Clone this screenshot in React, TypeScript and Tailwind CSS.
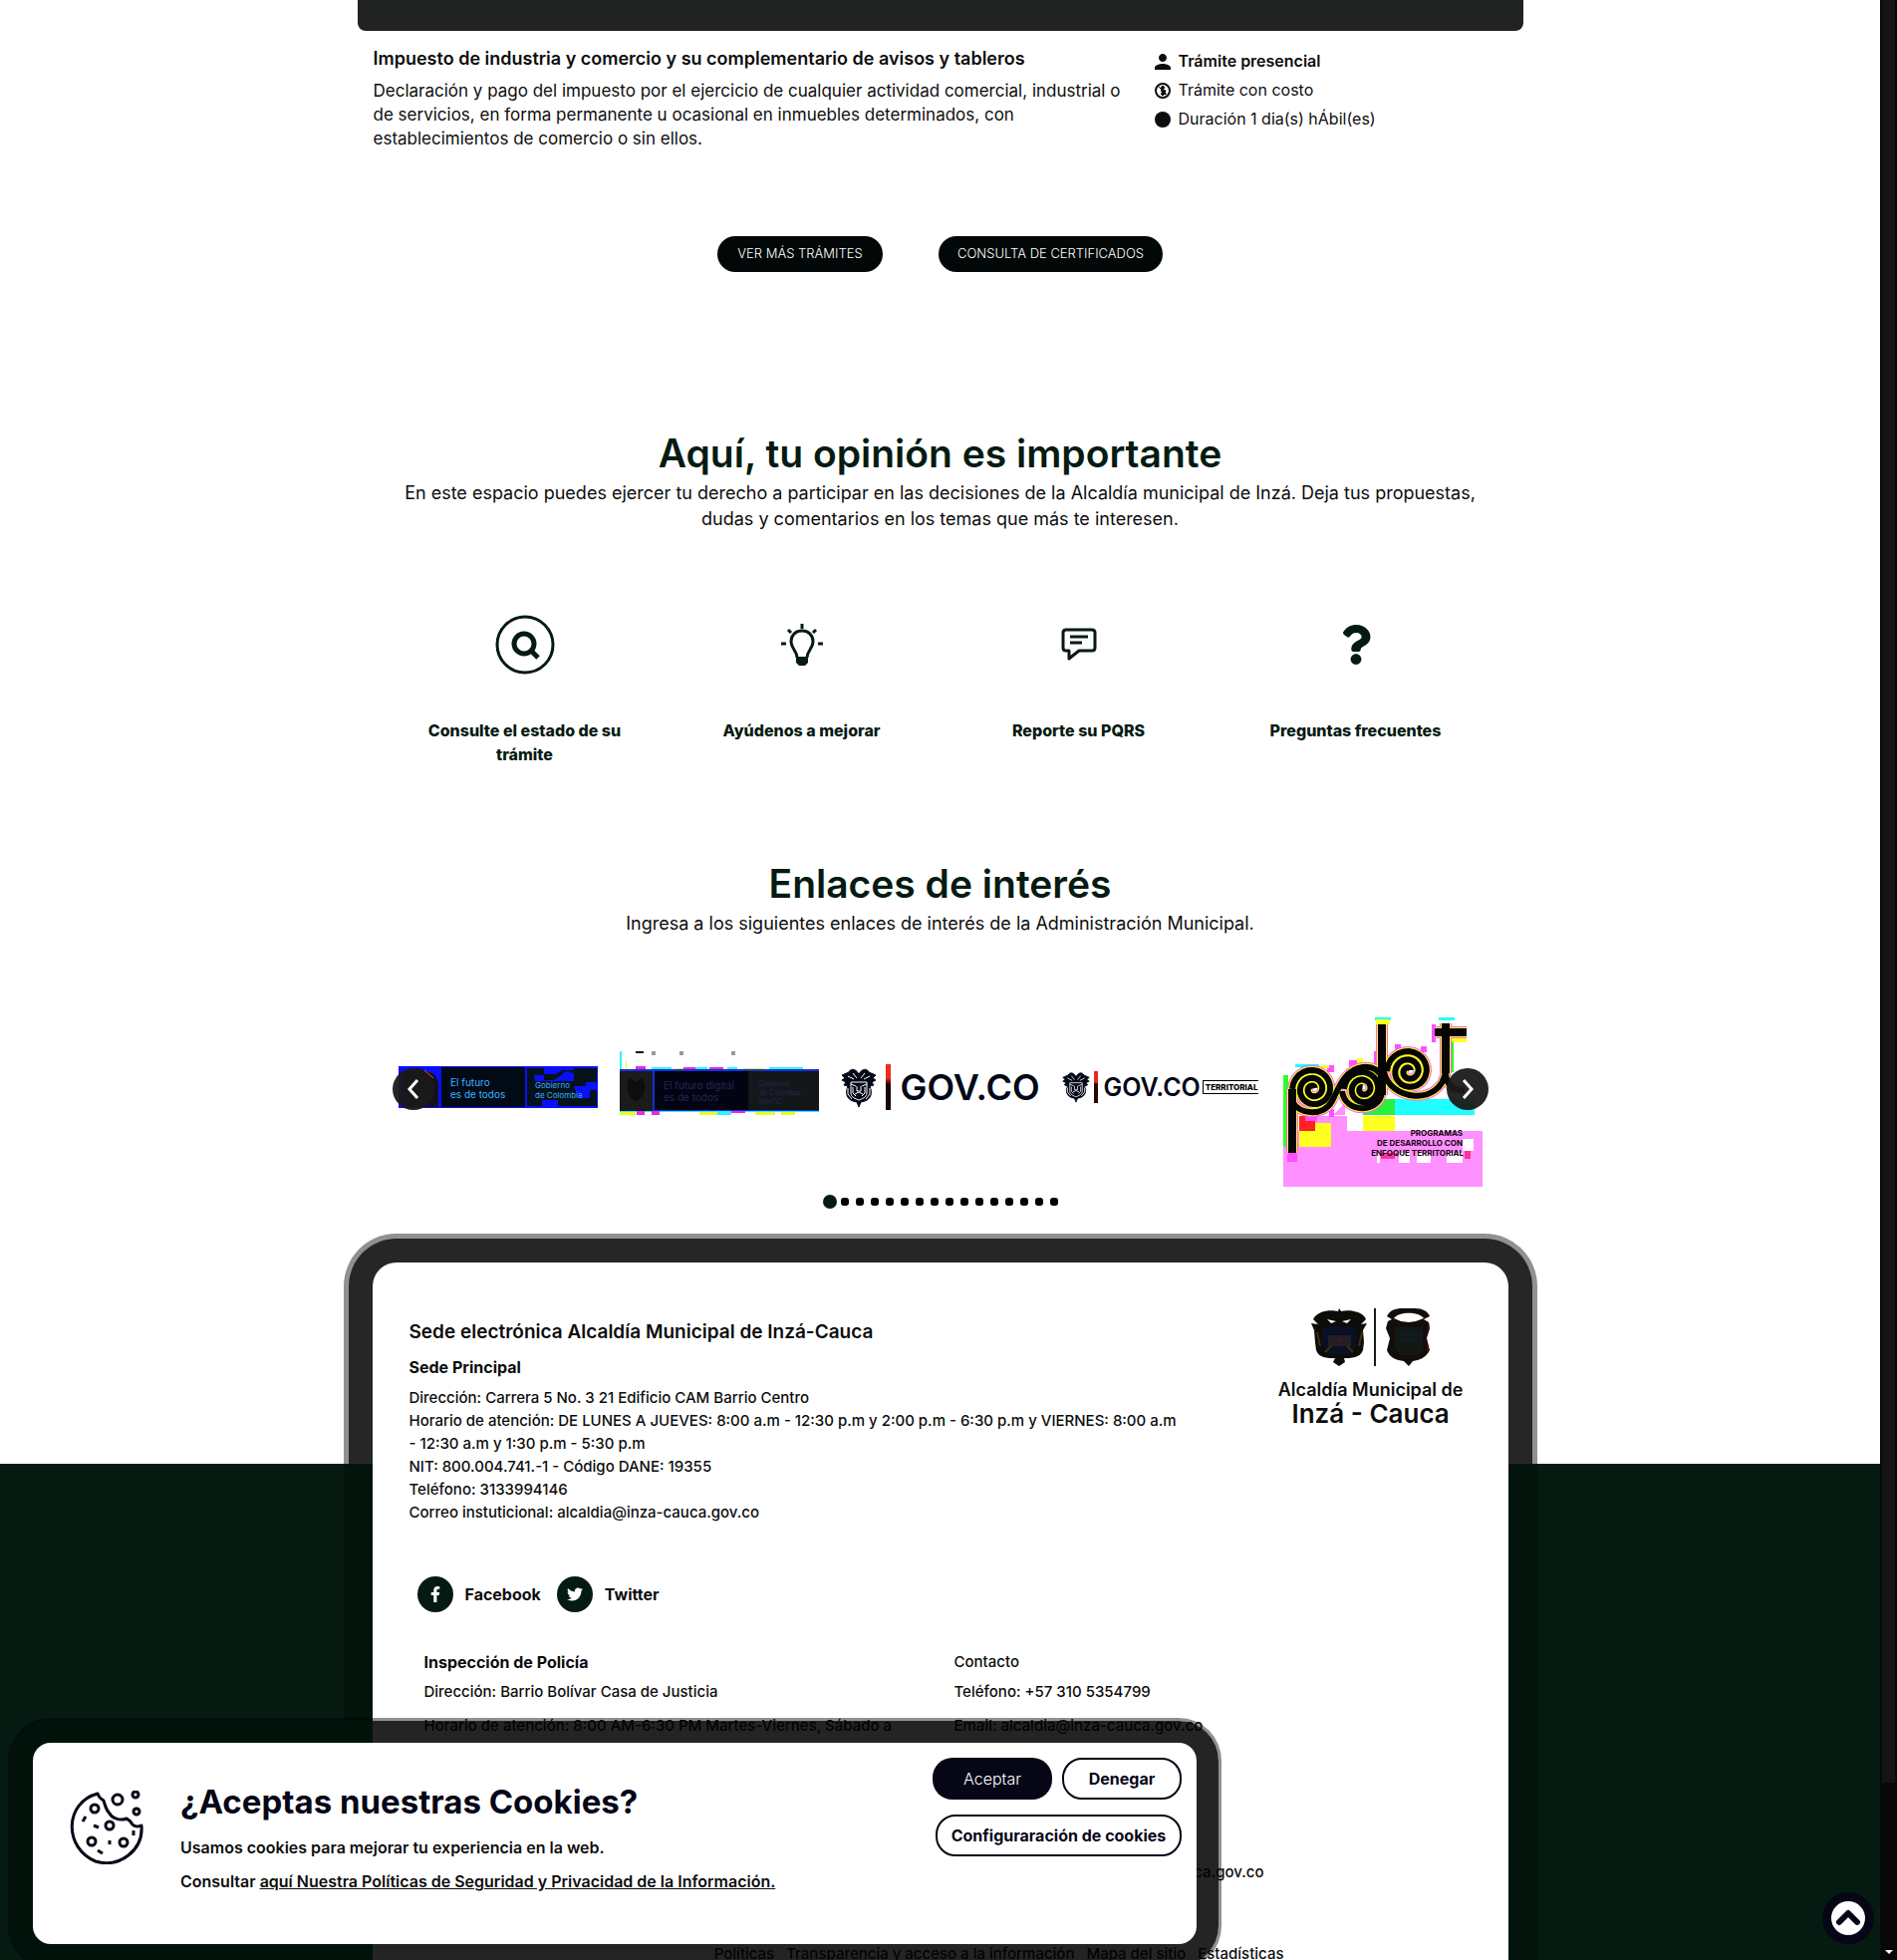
import React from 'react';
import { FaQuestion, FaTwitter, FaFacebookF } from 'react-icons/fa';
import { MdPerson } from 'react-icons/md';

function CoatLine({ className }: { className: string }) {
  return (
    <svg viewBox="0 0 36 40" className={className} fill="none" stroke="#020817" aria-hidden="true">
      <path d="M18 7 C14 0 9 2 8 5 L1 8 L4 11 L1 13 L5 15 L3 18 L7 19 C4 26 6 32 12 34 L16 35 L18 40 L20 35 L24 34 C30 32 32 26 29 19 L33 18 L31 15 L35 13 L32 11 L35 8 L28 5 C27 2 22 0 18 7Z" fill="#020817" strokeWidth="1" />
      <path d="M10 15 H26 V26 C26 30 21 32 18 33 C15 32 10 30 10 26Z" stroke="#fff" />
      <path d="M10 17 L15 19 M26 17 L21 19 M12 20 V26 L15 29 M24 20 V26 L21 29 M16 19 V24 H20 V19 M14 27 L18 25 L22 27" stroke="#fff" strokeWidth="1" />
      <path d="M7 9 L13 12 M29 9 L23 12 M12 6 L16 11 M24 6 L20 11 M7 21 V27 L11 32 M29 21 V27 L25 32" stroke="#fff" strokeWidth="1" />
    </svg>
  );
}

function FuturoBanner() {
  return (
    <svg viewBox="0 0 200 42" className="w-full" role="img" aria-label="El futuro es de todos">
      <rect width="200" height="42" fill="#0a10fa" />
      <path d="M4 6 L20 2 L36 8 L40 16 V41 H4Z" fill="#12121c" />
      <path d="M26 4 L35 12" stroke="#e86030" strokeWidth="1" />
      <rect x="43" y="1" width="84" height="40" fill="#020a16" />
      <path d="M129 2 H146 V8 H158 L164 4 H176 V2 H199 V16 H188 V24 H199 V40 H160 V34 H144 V40 H129Z" fill="#04121c" />
      <path d="M136 9 H146 V14 H156 L163 9 L168 5 L176 7 V15 H137Z M176 20 H192 V32 H180Z" fill="#0a10fa" />
      <g fontFamily="Inter, sans-serif">
        <g fill="#3db4ff" fontSize="10">
          <text x="52" y="20">El futuro</text>
          <text x="52" y="32">es de todos</text>
        </g>
        <g fill="#43a8f5" fontSize="8">
          <text x="137" y="22">Gobierno</text>
          <text x="137" y="32">de Colombia</text>
        </g>
      </g>
    </svg>
  );
}

function DigitalBanner() {
  return (
    <svg viewBox="0 0 200 64" className="w-full" role="img" aria-label="El futuro digital es de todos">
      <path d="M16 0 h8 v2 h-8Z" fill="#111" />
      <path d="M32 0 h4 v4 h-4Z M60 0 h4 v4 h-4Z M112 0 h4 v4 h-4Z" fill="#999" />
      <path d="M0 0 h2 v20 h-2Z M32 16 h20 v3 h-20Z M76 16 h12 v3 h-12Z M108 16 h10 v3 h-10Z M150 16 h34 v2 h-34Z M0 60 h200 v1 h-200Z M98 61 h14 v3 h-14Z" fill="#2ff3ff" />
      <path d="M6 9 h1 v9 h-1Z M18 17 h8 v2 h-8Z M56 17 h8 v2 h-8Z M124 17 h20 v1 h-20Z M0 61 h16 v3 h-16Z M80 61 h18 v3 h-18Z M136 61 h20 v3 h-20Z M162 61 h14 v3 h-14Z" fill="#e4ff20" />
      <path d="M16 15 h10 v3 h-10Z M64 16 h12 v2 h-12Z M90 16 h14 v2 h-14Z M17 60 h8 v4 h-8Z M32 60 h8 v4 h-8Z M112 60 h14 v2 h-14Z" fill="#e22be8" />
      <rect y="18" width="200" height="42" fill="#1230d8" />
      <rect y="20" width="33" height="40" fill="#1b1b1b" />
      <path d="M10 27 C5 32 7 46 16 50 C26 46 28 32 22 27 L16 31Z" fill="#0d0d0d" />
      <rect x="35" y="20" width="94" height="39" fill="#020412" />
      <rect x="129" y="20" width="71" height="39" fill="#14171a" />
      <g fontFamily="Inter, sans-serif">
        <g fill="#25255a" fontSize="10">
          <text x="44" y="38">El futuro digital</text>
          <text x="44" y="50">es de todos</text>
        </g>
        <g fill="#262650" fontSize="7">
          <text x="140" y="35">Gobierno</text>
          <text x="140" y="44">de Colombia</text>
          <text x="140" y="53">MinTIC</text>
        </g>
      </g>
    </svg>
  );
}

/** Inward spiral, clockwise from its leftmost point. */
function spiral(cx: number, cy: number, radius: number, turns: number) {
  const steps = Math.round(turns * 24);
  return Array.from({ length: steps + 1 }, (_, i) => {
    const angle = Math.PI + (i / 24) * Math.PI * 2;
    const r = radius - (radius - 2) * (i / steps);
    return `${i ? 'L' : 'M'}${(cx + r * Math.cos(angle)).toFixed(1)} ${(cy + r * Math.sin(angle)).toFixed(1)}`;
  }).join(' ');
}

function PdetLogo() {
  return (
    <svg viewBox="0 0 200 172" className="w-full" role="img" aria-label="Programas de desarrollo con enfoque territorial">
      <rect y="116" width="200" height="56" fill="#ff90ff" />
      <path d="M48 101 H64 V116 H16 V101Z" fill="#ff90ff" />
      <path d="M50 100 L62 88 V100Z" fill="#ff90ff" />
      <rect y="60" width="5" height="72" fill="#2cff2c" />
      <rect x="80" y="84" width="32" height="16" fill="#28f03c" />
      <rect x="112" y="84" width="80" height="16" fill="#20ffff" />
      <path d="M80 101 H112 V116 H80Z M16 116 H48 V132 H16Z M32 108 H48 V116 H32Z" fill="#ffff20" />
      <rect x="16" y="101" width="16" height="15" fill="#ff2020" />
      <path d="M12 52 H36 V49 H12Z M92 2 H108 V5 H92Z M156 2 H172 V5 H156Z" fill="#20ffff" />
      <path d="M167 25 h4 v32 h-4Z" fill="#2cff2c" />
      <path d="M91 36 h4 v18 h-4Z M66 45 h8 v8 h-8Z M112 29 h6 v6 h-6Z M149 9 h4 v18 h-4Z M4 138 h10 v9 h-10Z M44 50 h7 v7 h-7Z M46 94 h5 v8 h-5Z M22 102 h12 v4 h-12Z M138 31 h6 v6 h-6Z" fill="#ff50ff" />
      <path d="M168 22 h16 v5 h-16Z M93 4 h14 v5 h-14Z M38 50 h8 v3 h-8Z M74 43 h6 v6 h-6Z" fill="#ffff20" />
      <path d="M180 124 h11 v12 h-11Z M116 138 h11 v10 h-11Z M134 138 h14 v10 h-14Z M164 138 h16 v10 h-16Z M94 138 h3 v10 h-3Z" fill="#fff" />
      <path d="M98 138 h14 v6 h-14Z M182 136 h6 v8 h-6Z" fill="#ff309c" />
      {[
        { color: '#ff60ff', curve: 10, stem: 12 },
        { color: '#ffff20', curve: 8, stem: 10 },
        { color: '#050505', curve: 6, stem: 8 },
      ].map((pen) => (
        <g key={pen.color} fill="none" stroke={pen.color}>
          <g strokeWidth={pen.stem}>
            <path d="M9 138 V74" />
            <path d="M99 9 V80" />
            <path d="M163 8 V58 M152 17 H184" />
          </g>
          <g strokeWidth={pen.curve}>
            <path d={spiral(30, 74, 21, 2.4)} />
            <path d={spiral(80, 74, 19, 2.2)} />
            <path d={spiral(126, 56, 22, 2.4)} />
            <path d="M9 86 C16 100 40 102 49 86 C56 72 62 54 80 52 C90 51 96 56 99 62" />
            <path d="M59 76 C62 100 98 98 99 76" />
            <path d="M101 56 C106 86 158 92 163 56 C163 70 170 76 182 75" />
          </g>
        </g>
      ))}
      <g fontFamily="Inter, sans-serif" fontWeight="700" fontSize="8" textAnchor="end" fill="#14000f">
        <text x="180" y="121">PROGRAMAS</text>
        <text x="180" y="131">DE DESARROLLO CON</text>
        <text x="181" y="141">ENFOQUE TERRITORIAL</text>
      </g>
    </svg>
  );
}

function AlcaldiaEmblems() {
  return (
    <svg viewBox="0 0 120 58" className="w-[120px]" aria-hidden="true">
      <path d="M2 11 C6 2 20 1 27 3 L28 0 L30 3 C38 1 52 3 55 11 L50 16 L56 15 L52 22 L53 34 L52 42 C49 50 40 50 33 50 L34 54 L28 58 L22 54 L24 50 C16 50 8 50 5 42 L4 34 L3 22 L0 15 L7 16Z" fill="#0d0c08" />
      <path d="M16 11 L25 13 L20 15Z M40 11 L31 13 L36 15Z" fill="#fff" />
      <path d="M11 22 L16 18 H41 L46 22 V36 L40 46 H17 L11 36Z" fill="#091024" />
      <path d="M17 27 H40 V38 H17Z" fill="#202024" />
      <circle cx="28" cy="32" r="2" fill="#51121a" />
      <path d="M14 44 L20 38 M42 44 L36 38 M6 24 L9 38 M51 24 L48 38" stroke="#40300c" strokeWidth="2" />
      <path d="M64 0 V58" stroke="#1b1b1b" strokeWidth="2" />
      <path d="M76 8 C79 2 84 0 92 0 H104 C112 0 117 3 119 8 L113 11 L118 14 L119 20 L116 30 L119 42 C115 50 108 52 102 53 L98 58 L93 53 C86 52 79 50 76 42 L79 30 L75 20 L77 13 L81 11Z" fill="#140e0a" />
      <path d="M83 10 C88 3 108 3 113 10 L105 13 L98 14 L90 13Z" fill="#fff" />
      <path d="M84 19 H112 V40 L107 47 H89 L84 40Z" fill="#131817" />
      <path d="M86 26 H110 M87 32 H108" stroke="#0a2028" strokeWidth="2" />
      <path d="M118 16 V22 M117 36 V42" stroke="#6c1410" strokeWidth="1" />
    </svg>
  );
}

function SearchIcon() {
  return (
    <svg viewBox="0 0 60 60" className="size-[60px]" fill="none" stroke="#051b12" aria-hidden="true">
      <circle cx="30" cy="30" r="28" strokeWidth="3" />
      <circle cx="29" cy="29" r="10" strokeWidth="5" />
      <path d="M36 36 L43 43" strokeWidth="5" />
    </svg>
  );
}

function BulbIcon() {
  return (
    <svg viewBox="0 0 42 42" className="size-[42px]" fill="none" stroke="#051b12" strokeWidth="3" aria-hidden="true">
      <path d="M16 34 C16 27 10 25 10 18 C10 11 15 7 21 7 C27 7 32 11 32 18 C32 25 26 27 26 34" />
      <path d="M15 33 H27 V39 L24 42 H18 L15 39Z" fill="#051b12" stroke="none" />
      <path d="M21 0 V5 M7 6 L10 9 M35 6 L32 9 M0 20 H5 M37 20 H42" />
    </svg>
  );
}

function CommentIcon() {
  return (
    <svg viewBox="0 0 36 34" className="w-[36px]" fill="none" stroke="#051b12" strokeWidth="3" aria-hidden="true">
      <path d="M5 2 H31 Q34 2 34 5 V20 Q34 23 31 23 H18 L8 31 V23 H5 Q2 23 2 20 V5 Q2 2 5 2Z" strokeLinejoin="round" />
      <path d="M9 9 H27 M9 15 H21" />
    </svg>
  );
}

function CookieIcon() {
  return (
    <svg viewBox="0 0 74 74" className="w-[74px] shrink-0" fill="none" stroke="#060617" strokeWidth="3" aria-hidden="true">
      <path d="M28 3 C-6 12 -6 58 26 71 C50 78 74 60 72 35 C68 37 63 36 61 31 L57 28 C50 31 42 27 40 23 C36 19 36 16 34 10 C31 8 29 7 28 3Z" strokeLinejoin="round" />
      <circle cx="48" cy="9" r="5" />
      <circle cx="66" cy="4" r="3" />
      <circle cx="67" cy="21" r="3" />
      <circle cx="25" cy="18" r="4" />
      <circle cx="40" cy="35" r="4" />
      <circle cx="22" cy="51" r="4" />
      <circle cx="54" cy="52" r="4" />
      <path d="M13 31 L16 26 M24 35 L29 37 M40 50 V54 M64 40 V45 M28 60 L33 63" />
    </svg>
  );
}

function CostIcon() {
  return (
    <svg viewBox="0 0 16 16" className="size-4" fill="none" stroke="#0d0d0d" aria-hidden="true">
      <circle cx="8" cy="8" r="7" strokeWidth="2" />
      <path d="M10 5 H7 V8 H10 V11 H6 M8 3 V13" strokeWidth="2" />
      <path d="M3 3 L13 13" strokeWidth="1" />
    </svg>
  );
}

function Tile({ icon, label }: { icon: React.ReactNode; label: string }) {
  return (
    <a href="#" className="flex flex-col items-center px-6 text-center text-[#051b12]">
      <span className="flex h-[60px] items-center">{icon}</span>
      <span className="mt-11 text-base leading-6 font-extrabold">{label}</span>
    </a>
  );
}

function Social({ icon, label }: { icon: React.ReactNode; label: string }) {
  return (
    <a href="#" className="flex items-center gap-3 text-base font-bold">
      <span className="flex size-9 items-center justify-center rounded-full bg-[#051b12] text-white">{icon}</span>
      {label}
    </a>
  );
}

function GovLogo({ small = false }: { small?: boolean }) {
  return small ? (
    <div className="flex items-center overflow-hidden">
      <CoatLine className="w-7 shrink-0" />
      <span className="ml-1 h-8 w-1 shrink-0 bg-linear-to-b from-[#e62a1a] from-35% to-[#2c0505] to-40%" />
      <span className="ml-[6px] text-[25px] leading-8 font-semibold text-[#020817]">GOV.CO</span>
      <span className="ml-[2px] shrink-0 border border-r-0 border-black pl-[2px] text-[8px] leading-3 font-extrabold text-black">TERRITORIAL</span>
    </div>
  ) : (
    <div className="flex items-center">
      <CoatLine className="w-9 shrink-0" />
      <span className="ml-[9px] h-[46px] w-[5px] shrink-0 bg-linear-to-b from-[#f02c1c] from-30% to-[#180404] to-45%" />
      <span className="ml-[10px] text-4xl leading-10 font-semibold text-[#020817]">GOV.CO</span>
    </div>
  );
}

function CarouselArrow({ side }: { side: 'prev' | 'next' }) {
  return (
    <button
      type="button"
      aria-label={side === 'prev' ? 'Anterior' : 'Siguiente'}
      className={`absolute top-[53px] flex size-[42px] items-center justify-center rounded-full bg-[#1a1a1a]/95 ${side === 'prev' ? '-left-[6px]' : '-right-[6px]'}`}
    >
      <svg viewBox="0 0 20 20" className="size-5" fill="none" stroke="#fff" strokeWidth="3">
        <path d={side === 'prev' ? 'M14 1 L6 10 L14 19' : 'M6 1 L14 10 L6 19'} />
      </svg>
    </button>
  );
}

export default function App() {
  return (
    <div className="relative flex h-screen overflow-hidden bg-white font-['Inter',sans-serif] text-[#0d0d0d]">
      <main className="min-w-0 flex-1 overflow-hidden">
        <section className="mx-auto w-[1170px]">
          <div className="h-[31px] rounded-b-lg bg-[#202322]" />
          <div className="flex px-4">
            <div className="w-[756px] pt-4">
              <h3 className="text-lg leading-6 font-semibold">Impuesto de industria y comercio y su complementario de avisos y tableros</h3>
              <p className="mt-2 text-[17px] leading-6">
                Declaración y pago del impuesto por el ejercicio de cualquier actividad comercial, industrial o de servicios, en forma permanente u ocasional en inmuebles determinados, con establecimientos de comercio o sin ellos.
              </p>
            </div>
            <ul className="ml-7 pt-4 text-base leading-[29px]">
              <li className="flex items-center gap-2 font-semibold">
                <svg viewBox="0 0 16 16" className="size-4" aria-hidden="true">
                  <MdPerson x="-4" y="-4" size={24} />
                </svg>
                Trámite presencial
              </li>
              <li className="flex items-center gap-2">
                <CostIcon />
                Trámite con costo
              </li>
              <li className="flex items-center gap-2">
                <span className="size-4 rounded-full bg-[#0d0d0d]" />
                Duración 1 dia(s) hÁbil(es)
              </li>
            </ul>
          </div>
          <div className="mt-[86px] flex justify-center gap-14 text-[13px] font-light text-white">
            <button type="button" className="h-9 w-[166px] rounded-full bg-[#020807]">VER MÁS TRÁMITES</button>
            <button type="button" className="h-9 w-[225px] rounded-full bg-[#020807]">CONSULTA DE CERTIFICADOS</button>
          </div>
        </section>

        <section className="mx-auto mt-[158px] w-[1112px] text-center">
          <h2 className="text-[39px] leading-12 font-semibold text-[#051b12]">Aquí, tu opinión es importante</h2>
          <p className="mt-[3px] text-lg leading-[26px]">
            En este espacio puedes ejercer tu derecho a participar en las decisiones de la Alcaldía municipal de Inzá. Deja tus propuestas, dudas y comentarios en los temas que más te interesen.
          </p>
          <div className="mt-[83px] grid grid-cols-4">
            <Tile icon={<SearchIcon />} label="Consulte el estado de su trámite" />
            <Tile icon={<BulbIcon />} label="Ayúdenos a mejorar" />
            <Tile icon={<CommentIcon />} label="Reporte su PQRS" />
            <Tile icon={<FaQuestion className="size-[40px]" />} label="Preguntas frecuentes" />
          </div>
        </section>

        <section className="mx-auto mt-[94px] w-[1088px] text-center">
          <h2 className="text-[39px] leading-12 font-semibold text-[#051b12]">Enlaces de interés</h2>
          <p className="mt-[3px] text-lg leading-[26px]">Ingresa a los siguientes enlaces de interés de la Administración Municipal.</p>
          <div className="relative mt-[79px]">
            <div className="grid grid-cols-5 items-center gap-[22px]">
              <a href="#" className="mb-7"><FuturoBanner /></a>
              <a href="#" className="mb-9"><DigitalBanner /></a>
              <a href="#" className="mb-7"><GovLogo /></a>
              <a href="#" className="mb-7"><GovLogo small /></a>
              <a href="#"><PdetLogo /></a>
            </div>
            <CarouselArrow side="prev" />
            <CarouselArrow side="next" />
          </div>
          <div className="mt-2 flex h-[14px] items-center justify-center">
            <span className="mr-1 size-[14px] rounded-full bg-[#051b12]" />
            {Array.from({ length: 15 }, (_, i) => (
              <span key={i} className="ml-[7px] size-2 rounded-[3px] bg-black first-of-type:ml-0 nth-2:ml-0" />
            ))}
          </div>
        </section>

        <footer className="relative mt-[54px]">
          <div className="absolute inset-y-0 left-1/2 w-[1140px] -translate-x-1/2 rounded-t-[24px] bg-[#242424] shadow-[0_0_0_24px_#262626,0_0_0_29px_#919191]" />
          <div className="absolute inset-x-0 top-[202px] bottom-0 flex justify-center bg-[#051b12]">
            <div className="w-[1198px] bg-[#03140c]" />
          </div>
          <div className="relative mx-auto h-[760px] w-[1140px] rounded-t-[24px] bg-white px-[37px] pt-[58px]">
            <div className="flex items-start justify-between">
              <div className="w-[782px]">
                <h2 className="text-[19px] leading-6 font-semibold">Sede electrónica Alcaldía Municipal de Inzá-Cauca</h2>
                <h3 className="mt-3 text-base leading-[22px] font-bold">Sede Principal</h3>
                <div className="mt-2 text-[15px] leading-[23px] font-medium">
                  <p>Dirección: Carrera 5 No. 3 21 Edificio CAM Barrio Centro</p>
                  <p>Horario de atención: DE LUNES A JUEVES: 8:00 a.m - 12:30 p.m y 2:00 p.m - 6:30 p.m y VIERNES: 8:00 a.m<br />- 12:30 a.m y 1:30 p.m - 5:30 p.m</p>
                  <p>NIT: 800.004.741.-1 - Código DANE: 19355</p>
                  <p>Teléfono: 3133994146</p>
                  <p>Correo instuticional: alcaldia@inza-cauca.gov.co</p>
                </div>
              </div>
              <div className="-mt-3 mr-2 flex flex-col items-center font-semibold">
                <AlcaldiaEmblems />
                <p className="mt-3 text-lg leading-6">Alcaldía Municipal de</p>
                <p className="text-[26px] leading-6">Inzá - Cauca</p>
              </div>
            </div>
            <div className="mt-[53px] flex gap-4 pl-2">
              <Social icon={<FaFacebookF className="size-4" />} label="Facebook" />
              <Social icon={<FaTwitter className="size-4" />} label="Twitter" />
            </div>
            <div className="mt-[38px] grid grid-cols-[532px_1fr] pl-[15px] text-[15px] leading-6 font-medium">
              <div>
                <h3 className="text-base leading-6 font-bold">Inspección de Policía</h3>
                <p className="mt-[6px]">Dirección: Barrio Bolívar Casa de Justicia</p>
                <p className="mt-[10px]">Horario de atención: 8:00 AM-6:30 PM Martes-Viernes, Sábado a</p>
              </div>
              <div>
                <p>Contacto</p>
                <p className="mt-[6px]">Teléfono: +57 310 5354799</p>
                <p className="mt-[10px]">Email: alcaldia@inza-cauca.gov.co</p>
              </div>
            </div>
            <p className="mt-[123px] pr-[208px] text-right text-[15px] leading-6 font-medium">alcaldia@inza-cauca.gov.co</p>
            <nav className="mt-[58px] flex justify-end gap-3 pr-[188px] text-[15px] leading-6 font-medium">
              <a href="#">Políticas</a>
              <a href="#">Transparencia y acceso a la información</a>
              <a href="#">Mapa del sitio</a>
              <a href="#">Estadísticas</a>
            </nav>
          </div>
        </footer>
      </main>

      <div className="flex w-[17px] flex-col justify-between bg-[#080808]" aria-hidden="true">
        <div className="mx-[2px] h-[1789px] bg-[#141414]" />
        <svg viewBox="0 0 8 5" className="mb-[5px] w-2 self-center"><path d="M0 0 H8 L4 4Z" fill="#fff" /></svg>
      </div>

      <div role="dialog" aria-label="Cookies" className="absolute bottom-4 left-[33px] w-[1168px]">
        <div className="absolute -inset-[22px] rounded-[40px] bg-[linear-gradient(90deg,#00120a_363px,rgba(0,0,0,0.86)_363px)] shadow-[0_0_0_3px_rgba(0,0,0,0.43)]" />
        <div className="relative flex h-[202px] items-start rounded-[18px] bg-white pl-[37px]">
          <div className="mt-12"><CookieIcon /></div>
          <div className="mt-[39px] ml-[37px] flex-1 text-base font-semibold">
            <h2 className="text-[33px] leading-10 font-bold text-[#060617]">¿Aceptas nuestras Cookies?</h2>
            <p className="mt-[14px] leading-6">Usamos cookies para mejorar tu experiencia en la web.</p>
            <p className="mt-[10px] leading-6">
              Consultar <a href="#" className="underline">aquí Nuestra Políticas de Seguridad y Privacidad de la Información.</a>
            </p>
          </div>
          <div className="mt-[15px] mr-[15px] flex flex-col items-end gap-[15px] text-base font-bold text-[#060617]">
            <div className="flex gap-[10px]">
              <button type="button" className="h-[42px] w-[120px] rounded-[20px] bg-[#060617] font-light text-white">Aceptar</button>
              <button type="button" className="h-[42px] w-[120px] rounded-[20px] border-2 border-[#060617]">Denegar</button>
            </div>
            <button type="button" className="h-[42px] w-[247px] rounded-[20px] border-2 border-[#060617]">Configuraración de cookies</button>
          </div>
        </div>
      </div>

      <button type="button" aria-label="Volver arriba" className="absolute right-[23px] bottom-4 flex size-[52px] items-center justify-center rounded-full bg-[#060617]">
        <svg viewBox="0 0 34 34" className="size-[34px]">
          <circle cx="17" cy="17" r="17" fill="#fff" />
          <path d="M8 21 L17 12 L26 21" fill="none" stroke="#060617" strokeWidth="6" strokeLinecap="round" strokeLinejoin="round" />
        </svg>
      </button>
    </div>
  );
}
